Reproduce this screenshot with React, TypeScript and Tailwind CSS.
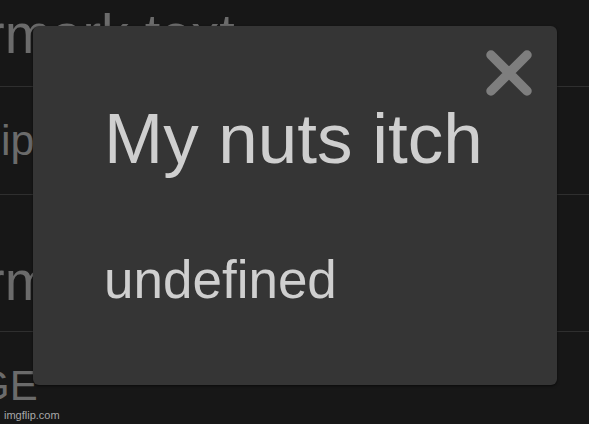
import React from 'react'

const font = { fontFamily: '"Liberation Sans", Arial, sans-serif' }

function CloseIcon() {
  return (
    <svg width="48" height="48" viewBox="0 0 48 48" aria-hidden="true">
      <path d="M6 6 L42 42 M42 6 L6 42" stroke="#7e7e7e" strokeWidth="9.5" strokeLinecap="round" />
    </svg>
  )
}

export default function App() {
  return (
    <div
      className="relative w-[589px] h-[424px] overflow-hidden bg-[#171717] text-[#6b6b6b]"
      style={font}
    >
      {/* list behind the modal */}
      <div className="flex flex-col">
        <div className="h-[87px] border-b border-[#2f2f2f] pt-[6px] overflow-hidden">
          <div className="ml-[-14px] text-[56px] leading-none whitespace-nowrap">rmark text</div>
        </div>
        <div className="h-[108px] border-b border-[#2f2f2f] pt-[32px] overflow-hidden">
          <div className="ml-[1px] text-[43px] leading-none whitespace-nowrap">ip</div>
        </div>
        <div className="h-[137px] border-b border-[#2f2f2f] pt-[58px] overflow-hidden">
          <div className="ml-[-14px] text-[56px] leading-none whitespace-nowrap">rmark</div>
        </div>
        <div className="h-[92px] pt-[33px] overflow-hidden">
          <div className="ml-[-23px] text-[42px] leading-none whitespace-nowrap">GE</div>
        </div>
      </div>

      {/* modal */}
      <div className="absolute left-[33px] top-[26px] w-[524px] h-[359px] rounded-[6px] bg-[#353535] shadow-[0_1px_3px_rgba(0,0,0,0.6)]">
        <button className="absolute right-[24px] top-[23px]" aria-label="Close">
          <CloseIcon />
        </button>
        <div className="pl-[71px] pt-[77px] text-[#cfcfcf]">
          <div className="text-[71px] leading-none whitespace-nowrap">My nuts itch</div>
          <div className="mt-[79px] text-[53px] leading-none whitespace-nowrap">undefined</div>
        </div>
      </div>

      {/* watermark */}
      <div className="absolute left-[4px] bottom-[3px] text-[11px] leading-none text-[#a8a8a8]">imgflip.com</div>
    </div>
  )
}
